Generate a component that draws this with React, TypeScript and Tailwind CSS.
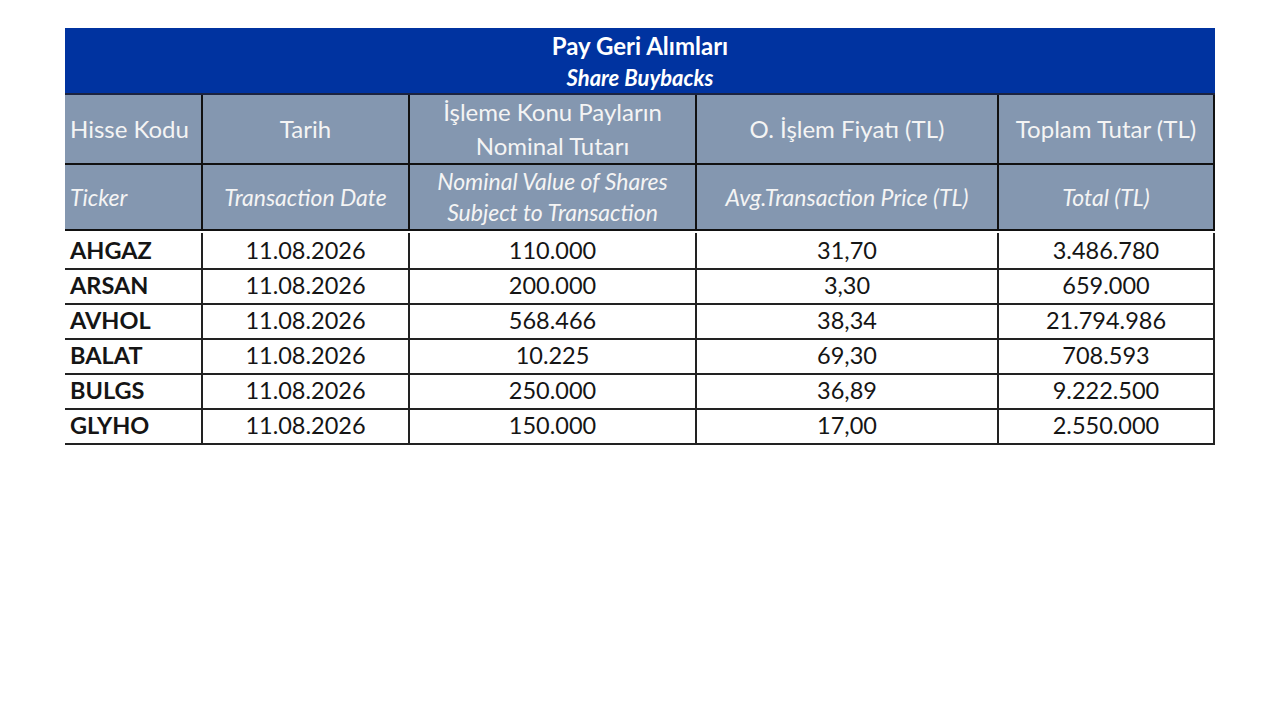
import React from "react";

const rows = [
  ["AHGAZ", "11.08.2026", "110.000", "31,70", "3.486.780"],
  ["ARSAN", "11.08.2026", "200.000", "3,30", "659.000"],
  ["AVHOL", "11.08.2026", "568.466", "38,34", "21.794.986"],
  ["BALAT", "11.08.2026", "10.225", "69,30", "708.593"],
  ["BULGS", "11.08.2026", "250.000", "36,89", "9.222.500"],
  ["GLYHO", "11.08.2026", "150.000", "17,00", "2.550.000"],
];

const cols = "grid grid-cols-[138px_207px_287px_302px_216px]";

export default function App() {
  return (
    <div className="min-h-[720px] w-[1280px] bg-white pt-[28px] pl-[65px] font-['Lato','Liberation_Sans',sans-serif]">
      <div className="w-[1150px]">
        {/* başlık */}
        <div className="flex h-[67px] flex-col items-center justify-center border-b-2 border-[#1b2340] bg-[#0033a0] pt-[2px] text-white">
          <div className="text-[24px] font-bold leading-[32px]">Pay Geri Alımları</div>
          <div className="text-[22px] font-bold italic leading-[31px]">Share Buybacks</div>
        </div>

        {/* Türkçe başlıklar */}
        <div className={`${cols} h-[70px] bg-[#8497b0] text-[24px] leading-[34px] text-[#f4f4f4]`}>
          <div className="flex items-center border-r-2 border-b-2 border-[#111] pl-[5px]">Hisse Kodu</div>
          <div className="flex items-center justify-center border-r-2 border-b-2 border-[#111]">Tarih</div>
          <div className="flex flex-col items-center justify-center border-r-2 border-b-2 border-[#111] text-center">
            <span>İşleme Konu Payların</span>
            <span>Nominal Tutarı</span>
          </div>
          <div className="flex items-center justify-center border-r-2 border-b-2 border-[#111]">O. İşlem Fiyatı (TL)</div>
          <div className="flex items-center justify-center border-r-2 border-b-2 border-[#111]">Toplam Tutar (TL)</div>
        </div>

        {/* İngilizce başlıklar */}
        <div className={`${cols} h-[66px] bg-[#8497b0] text-[23px] italic leading-[31px] text-[#f4f4f4]`}>
          <div className="flex items-center border-r-2 border-b-2 border-[#111] pl-[5px]">Ticker</div>
          <div className="flex items-center justify-center border-r-2 border-b-2 border-[#111]">Transaction Date</div>
          <div className="flex flex-col items-center justify-center border-r-2 border-b-2 border-[#111] text-center">
            <span>Nominal Value of Shares</span>
            <span>Subject to Transaction</span>
          </div>
          <div className="flex items-center justify-center border-r-2 border-b-2 border-[#111]">Avg.Transaction Price (TL)</div>
          <div className="flex items-center justify-center border-r-2 border-b-2 border-[#111]">Total (TL)</div>
        </div>

        {rows.map((r) => (
          <div key={r[0]} className={`${cols} h-[35px] pt-[2px] text-[23.5px] text-[#151515]`}>
            <div className="flex items-center border-r-2 border-b-2 border-[#222] pl-[5px] font-bold">{r[0]}</div>
            <div className="flex items-center justify-center border-r-2 border-b-2 border-[#222]">{r[1]}</div>
            <div className="flex items-center justify-center border-r-2 border-b-2 border-[#222]">{r[2]}</div>
            <div className="flex items-center justify-center border-r-2 border-b-2 border-[#222]">{r[3]}</div>
            <div className="flex items-center justify-center border-r-2 border-b-2 border-[#222]">{r[4]}</div>
          </div>
        ))}
      </div>
    </div>
  );
}
